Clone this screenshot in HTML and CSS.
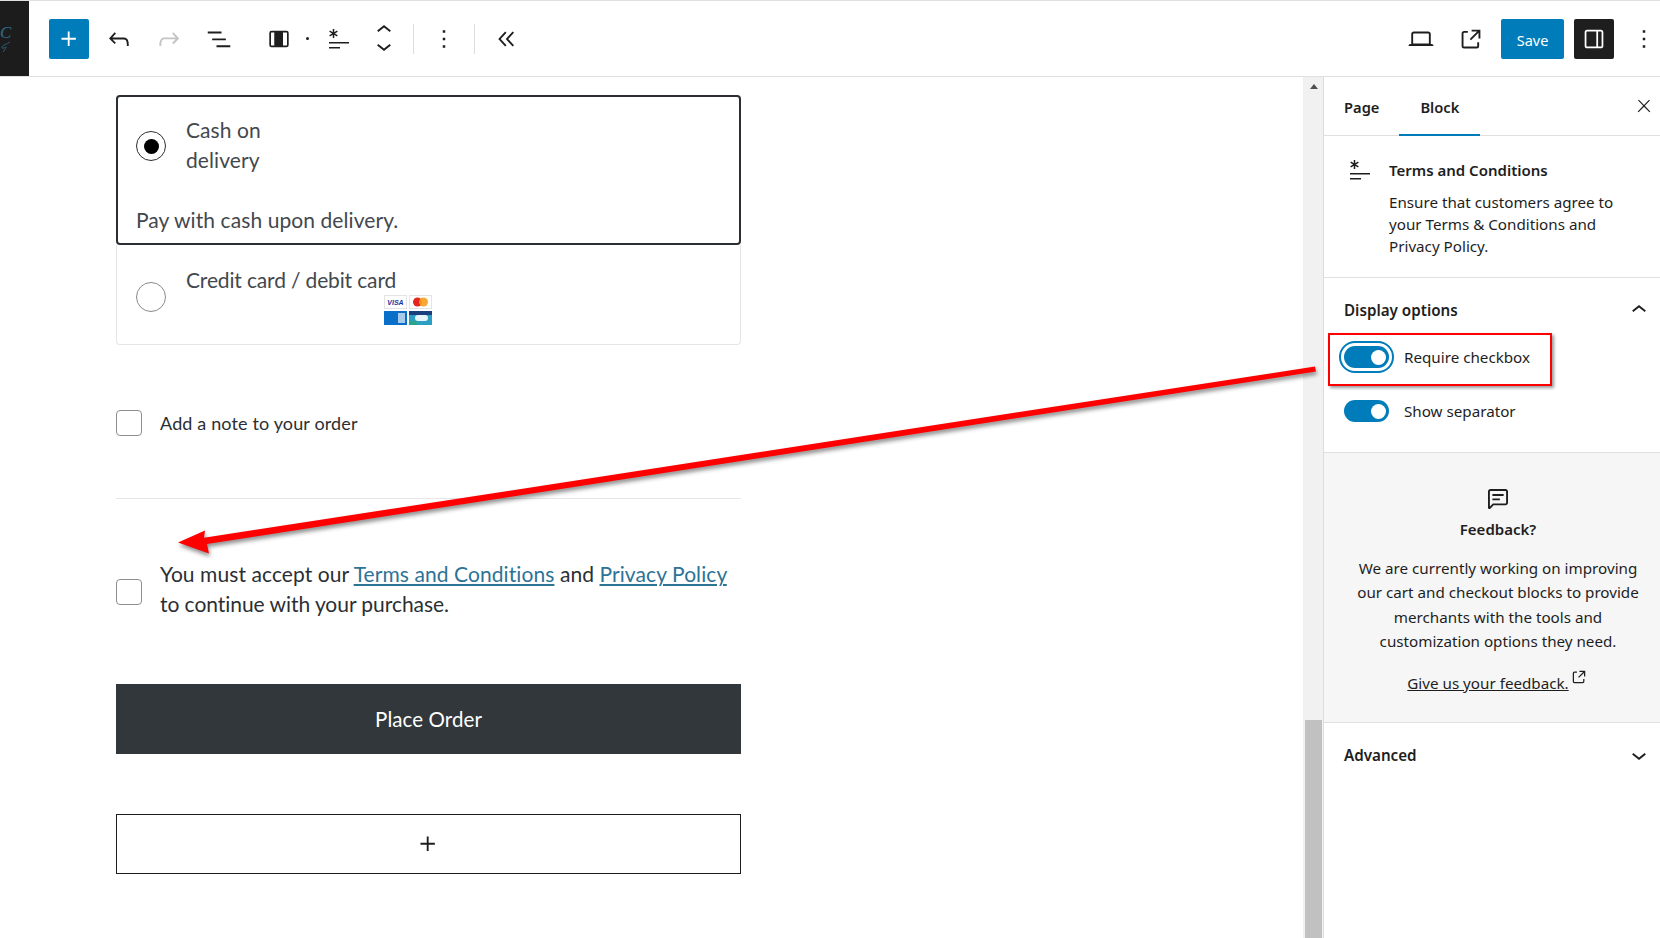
FILE: index.html
```html
<!DOCTYPE html>
<html lang="en">
<head>
<meta charset="utf-8">
<title>Checkout editor</title>
<link rel="stylesheet" href="styles.css">
</head>
<body>
<div class="app">
  <header class="topbar">
    <div class="logo"><span class="logo-c">C</span><svg class="logo-swirl" viewBox="0 0 12 12" width="12" height="12"><path d="M10 1C7 3 3 4 2 6s3 1 4 0-2 4-3 5"/></svg></div>
    <div class="tools">
      <button class="tool tool-primary"><svg viewBox="0 0 24 24" class="ic"><path d="M11 12.500V17.500H12.500V12.500H17.500V11H12.500V6H11V11H6V12.500H11Z"/></svg></button>
      <span class="tool"><svg viewBox="0 0 24 24" class="ic"><path d="M18.300 11.700c-.6-.6-1.400-.9-2.300-.9H6.700l2.900-3.300-1.100-1-4.500 5L8.500 16l1-1-2.700-2.700H16c.5 0 .9.2 1.300.5 1 1 1 3.400 1 4.500v.3h1.500v-.2c0-1.500 0-4.300-1.500-5.700z"/></svg></span>
      <span class="tool tool-off"><svg viewBox="0 0 24 24" class="ic"><path d="M15.600 6.500l-1.100 1 2.900 3.300H8c-.9 0-1.700.3-2.300.9-1.400 1.500-1.400 4.200-1.400 5.600v.2h1.500v-.3c0-1.100 0-3.500 1-4.500.3-.3.7-.5 1.300-.5h9.200L14.500 15l1.100 1.100 4.600-4.600-4.600-5z"/></svg></span>
      <span class="tool"><svg viewBox="0 0 24 24" class="ic"><path d="M3 6h11v1.500H3V6Zm3.500 5.500h11V13h-11v-1.500ZM21 17H10v1.500h11V17Z"/></svg></span>
      <span class="tool tool-columns"><svg viewBox="0 0 24 24" class="ic-columns"><path d="M4.500 3.800h15A2.200 2.200 0 0 1 21.700 6v12a2.200 2.200 0 0 1-2.200 2.200h-15A2.200 2.200 0 0 1 2.300 18V6a2.200 2.200 0 0 1 2.200-2.200Zm0 1.700a.5.500 0 0 0-.5.500v12a.5.500 0 0 0 .5.500H7.500v-13Zm11.500 0v13h3.500a.5.500 0 0 0 .5-.5V6a.5.500 0 0 0-.5-.5Z"/><path d="M7.500 5.500h8.500v13H7.500z"/></svg></span>
      <span class="tool-dot"></span>
      <span class="tool"><svg viewBox="0 0 24 24" class="ic-term"><use href="#terms"/></svg></span>
      <span class="tool-updown">
        <svg viewBox="0 0 24 24" class="ic-mini"><path d="M6.500 12.400L12 8l5.500 4.400-.9 1.200L12 10l-4.500 3.600-1-1.200z"/></svg>
        <svg viewBox="0 0 24 24" class="ic-mini"><path d="M17.500 11.600L12 16l-5.500-4.400.9-1.200L12 14l4.500-3.600 1 1.200z"/></svg>
      </span>
      <span class="tool-sep"></span>
      <span class="tool tool-more"><svg viewBox="0 0 24 24" class="ic"><path d="M13 19h-2v-2h2v2zm0-6h-2v-2h2v2zm0-6h-2V5h2v2z"/></svg></span>
      <span class="tool-sep tool-sep-end"></span>
      <span class="tool tool-collapse"><svg viewBox="0 0 24 24" class="ic"><path d="M11.600 7l-1.100-1L5 12l5.500 6 1.100-1L7 12l4.600-5zm6 0l-1.100-1-5.500 6 5.500 6 1.100-1-4.600-5 4.600-5z"/></svg></span>
    </div>
    <div class="actions">
      <span class="tool"><svg viewBox="0 0 24 24" class="ic"><path d="M20.500 16h-.7V8c0-1.100-.9-2-2-2H6.200c-1.100 0-2 .9-2 2v8h-.7c-.8 0-1.500.7-1.500 1.500h20c0-.8-.7-1.500-1.500-1.500zM5.700 8c0-.3.2-.5.5-.5h11.600c.3 0 .5.2.5.5v7.600H5.700V8z"/></svg></span>
      <span class="tool"><svg viewBox="0 0 24 24" class="ic"><path d="M19.500 4.500h-7V6h4.440l-5.970 5.970 1.060 1.060L18 7.060v4.440h1.500v-7Zm-13 1a2 2 0 0 0-2 2v10a2 2 0 0 0 2 2h10a2 2 0 0 0 2-2v-3H17v3a.5.5 0 0 1-.5.5h-10a.5.5 0 0 1-.5-.5v-10a.5.5 0 0 1 .5-.5h3V5.500h-3Z"/></svg></span>
      <button class="save">Save</button>
      <button class="tool tool-dark"><svg viewBox="0 0 24 24" class="ic-panel"><path d="M18 4H6c-1.100 0-2 .9-2 2v12c0 1.100.9 2 2 2h12c1.100 0 2-.9 2-2V6c0-1.100-.9-2-2-2zm-4 14.500H6c-.3 0-.5-.2-.5-.5V6c0-.3.2-.5.5-.5h8v13zm4.500-.5c0 .3-.2.5-.5.5h-2.500v-13H18c.3 0 .5.2.5.5v12z"/></svg></button>
      <span class="tool tool-opts"><svg viewBox="0 0 24 24" class="ic"><path d="M13 19h-2v-2h2v2zm0-6h-2v-2h2v2zm0-6h-2V5h2v2z"/></svg></span>
    </div>
  </header>

  <div class="workspace">
    <main class="canvas">
      <section class="pay pay-selected">
        <div class="pay-row">
          <span class="radio radio-on"></span>
          <span class="pay-label pay-label-narrow">Cash on delivery</span>
        </div>
        <p class="pay-desc">Pay with cash upon delivery.</p>
      </section>
      <section class="pay pay-other">
        <div class="pay-row">
          <span class="radio"></span>
          <div>
            <span class="pay-label pay-label-tight">Credit card / debit card</span>
            <svg class="cards" viewBox="0 0 48 30" width="48" height="30">
              <rect x=".5" y=".5" width="22" height="13" fill="#fff" stroke="#e4e4e4"/>
              <text x="11.500" y="10" class="visa">VISA</text>
              <rect x="25.500" y=".5" width="22" height="13" fill="#fff" stroke="#e4e4e4"/>
              <circle cx="33.500" cy="7" r="4.500" fill="#e5241d"/>
              <circle cx="39.500" cy="7" r="4.500" fill="#f79e1b" opacity=".9"/>
              <rect y="16" width="23" height="14" fill="#0a6fc9"/>
              <rect x="14" y="18" width="7" height="10" fill="#a9cbea"/>
              <rect x="25" y="16" width="23" height="14" fill="#2b9fc4"/>
              <rect x="25" y="16" width="23" height="4" fill="#1b3f7d"/>
              <rect x="25" y="26" width="8" height="4" fill="#2aa58c"/>
              <rect x="31" y="20" width="13" height="6" rx="3" fill="#e8f4f8"/>
            </svg>
          </div>
        </div>
      </section>

      <label class="check-row note-row">
        <span class="check"></span>
        <span>Add a note to your order</span>
      </label>

      <hr class="divider">

      <div class="check-row terms-row">
        <span class="check check-terms"></span>
        <p class="terms-text">You must accept our <a href="#">Terms and Conditions</a> and <a href="#">Privacy Policy</a> <span class="terms-tail">to continue with your purchase.</span></p>
      </div>

      <button class="place">Place Order</button>

      <div class="add-block"><svg viewBox="0 0 24 24" class="ic"><path d="M11 12.500V17.500H12.500V12.500H17.500V11H12.500V6H11V11H6V12.500H11Z"/></svg></div>
    </main>

    <div class="scrollbar">
      <span class="scroll-arrow"></span>
      <span class="scroll-thumb"></span>
    </div>

    <aside class="sidebar">
      <nav class="tabs">
        <span class="tab">Page</span>
        <span class="tab tab-active">Block</span>
        <svg viewBox="0 0 24 24" class="tab-close"><path d="M13 11.800l6.100-6.300-1-1-6.100 6.200-6.100-6.200-1 1 6.100 6.300-6.500 6.700 1 1 6.500-6.600 6.500 6.600 1-1z"/></svg>
      </nav>

      <section class="card">
        <svg viewBox="0 0 24 24" class="ic-term card-icon"><use href="#terms"/></svg>
        <div class="card-body">
          <h2 class="card-title">Terms and Conditions</h2>
          <p class="card-desc">Ensure that customers agree to your Terms &amp; Conditions and Privacy Policy.</p>
        </div>
      </section>

      <section class="panel">
        <div class="panel-head">
          <span>Display options</span>
          <svg viewBox="0 0 24 24" class="ic"><path d="M6.500 12.400L12 8l5.500 4.400-.9 1.200L12 10l-4.500 3.600-1-1.200z"/></svg>
        </div>
        <div class="toggle-row toggle-first"><span class="toggle toggle-focus"></span><span>Require checkbox</span></div>
        <div class="toggle-row"><span class="toggle"></span><span>Show separator</span></div>
      </section>

      <section class="feedback">
        <svg viewBox="0 0 24 24" class="ic feedback-icon"><path d="M18 4H6c-1.100 0-2 .9-2 2v12.900c0 .6.5 1.100 1.100 1.100.3 0 .5-.1.8-.3L8.500 17H18c1.100 0 2-.9 2-2V6c0-1.100-.9-2-2-2zm.5 11c0 .3-.2.5-.5.5H7.900l-2.400 2.400V6c0-.3.2-.5.5-.5h12c.3 0 .5.2.5.5v9z"/><path d="M7.500 8h9v1.500h-9zm0 3.500h6V13h-6z"/></svg>
        <h3 class="feedback-title">Feedback?</h3>
        <p class="feedback-text">We are currently working on improving our cart and checkout blocks to provide merchants with the tools and customization options they need.</p>
        <p class="feedback-link"><a href="#">Give us your feedback.</a><svg viewBox="0 0 24 24" class="ext"><path d="M19.500 4.500h-7V6h4.440l-5.970 5.970 1.060 1.060L18 7.060v4.440h1.500v-7Zm-13 1a2 2 0 0 0-2 2v10a2 2 0 0 0 2 2h10a2 2 0 0 0 2-2v-3H17v3a.5.5 0 0 1-.5.5h-10a.5.5 0 0 1-.5-.5v-10a.5.5 0 0 1 .5-.5h3V5.500h-3Z"/></svg></p>
      </section>

      <section class="panel-closed">
        <span>Advanced</span>
        <svg viewBox="0 0 24 24" class="ic"><path d="M17.500 11.600L12 16l-5.500-4.400.9-1.200L12 14l4.500-3.600 1 1.200z"/></svg>
      </section>
    </aside>
  </div>

  <div class="callout-box"></div>
  <svg class="callout-arrow" viewBox="0 0 1660 938" width="1660" height="938" aria-hidden="true">
    <path d="M1315 366.500 L204 537.800 L205 530.500 L178 542.500 L209 553.500 L207 544 L1316 371.500Z"/>
  </svg>
</div>

<svg class="defs" width="0" height="0" aria-hidden="true">
  <symbol id="terms" viewBox="0 0 24 24">
    <path d="M2 15h20v1.500H2zM2 20h11v1.500H2z"/>
    <path class="terms-star" d="M6.500 2v9M2.600 4.200l7.800 4.600M2.600 8.800l7.800-4.600"/>
  </symbol>
</svg>
</body>
</html>
```
FILE: styles.css
```css
* { box-sizing: border-box; }
html, body { margin: 0; height: 100%; overflow: hidden; background: #fff; }
body { font-family: "Noto Sans", "Open Sans", sans-serif; font-size: 15.2px; color: #1e1e1e; }
p, h2, h3 { margin: 0; }
button { border: 0; padding: 0; font: inherit; }
a { color: inherit; }

.app { position: relative; width: 1660px; height: 938px; overflow: hidden; display: flex; flex-direction: column; }

/* top bar */
.topbar { height: 77px; flex: none; display: flex; align-items: center; border-top: 1px solid #e0e0e0; border-bottom: 1px solid #e0e0e0; background: #fff; }
.logo { width: 29px; height: 75px; background: #1c1c1c; overflow: hidden; flex: none; display: flex; flex-direction: column; justify-content: center; }
.logo-c { font: italic 17px/16px "Liberation Serif", serif; color: #2f6f8e; }
.logo-swirl { fill: none; stroke: #2a5f7a; stroke-width: 1; }
.tools { display: flex; align-items: center; gap: 10px; margin-left: 20px; flex: 1; }
.actions { display: flex; align-items: center; gap: 10px; }
.tool { width: 40px; height: 40px; display: flex; align-items: center; justify-content: center; flex: none; color: #1e1e1e; background: none; border-radius: 2px; }
.ic { width: 30px; height: 30px; fill: currentColor; flex: none; }
.ic-columns { width: 24px; height: 24px; fill: currentColor; }
.ic-panel { width: 28px; height: 28px; fill: currentColor; }
.ic-term { width: 24px; height: 24px; fill: currentColor; flex: none; }
.terms-star { fill: none; stroke: currentColor; stroke-width: 1.5; }
.ic-mini { width: 30px; height: 30px; fill: currentColor; display: block; margin: -7px 0; flex: none; }
.tool-primary { background: #007cba; color: #fff; }
.tool-off { color: #c4c4c4; }
.tool-columns { margin-left: 10px; }
.tool-dot { width: 3px; height: 3px; background: #1e1e1e; border-radius: 50%; margin-left: -3px; flex: none; }
.tool-updown { width: 30px; display: flex; flex-direction: column; align-items: center; margin-top: -2px; flex: none; }
.tool-sep { width: 1px; height: 30px; background: #ddd; margin-left: 4px; flex: none; }
.tool-sep-end { margin-left: 0; }
.tool-collapse { margin-left: 2px; }
.save { width: 63px; height: 40px; background: #007cba; color: #fff; border-radius: 2px; font-size: 14.5px; padding-top: 2px; }
.tool-dark { background: #1e1e1e; color: #fff; }
.tool-opts { width: 32px; margin-left: 4px; }

/* workspace */
.workspace { flex: 1; min-height: 0; display: flex; }
.canvas { width: 1303px; flex: none; padding: 18px 0 0 116px; overflow: hidden; font-family: Lato, sans-serif; color: #43484d; font-size: 21px; letter-spacing: .08px; line-height: 30px; }
.canvas > * { width: 625px; }

.pay { display: block; }
.pay-selected { border: 2px solid #2b2f33; border-radius: 4px; padding: 18px 18px 0; height: 150px; }
.pay-other { border: 1px solid #e6e6e6; border-top: 0; border-radius: 0 0 4px 4px; padding: 20px 19px 0; height: 100px; }
.pay-row { display: flex; align-items: center; gap: 20px; }
.pay-label { display: block; }
.pay-label-narrow { width: 120px; }
.pay-label-tight { letter-spacing: -.15px; }
.pay-desc { margin-top: 30px; }
.radio { width: 30px; height: 30px; margin-top: 2px; border: 1px solid #8a8a8a; border-radius: 50%; flex: none; display: flex; align-items: center; justify-content: center; }
.pay-other .radio { margin-top: 4px; }
.radio-on { border-color: #2b2f33; }
.radio-on::before { content: ""; width: 15px; height: 15px; background: #000; border-radius: 50%; }
.cards { display: block; margin-left: 198px; }
.visa { font: italic 700 7px "Liberation Sans", sans-serif; fill: #1a2f9c; text-anchor: middle; letter-spacing: 0; }

.check-row { display: flex; gap: 18px; color: #2b2f33; }
.check { width: 26px; height: 26px; border: 1px solid #8f8f8f; border-radius: 4px; background: #fff; flex: none; }
.note-row { margin-top: 64px; height: 27px; align-items: center; font-size: 18px; letter-spacing: .14px; }
.divider { height: 1px; margin: 62px 0 0; border: 0; background: #e6e6e6; }
.terms-row { margin-top: 60px; align-items: flex-start; }
.check-terms { margin-top: 20px; }
.terms-text { flex: 1; }
.terms-text a { color: #2c7396; }
.terms-tail { letter-spacing: -.05px; }

.place { display: block; height: 70px; margin-top: 65px; padding-bottom: 1px; background: #32373c; color: #fff; font: inherit; font-size: 20.5px; letter-spacing: .08px; }
.add-block { height: 60px; margin-top: 60px; padding-right: 2px; border: 1px solid #1e1e1e; display: flex; align-items: center; justify-content: center; color: #1e1e1e; }

/* scrollbar */
.scrollbar { width: 21px; flex: none; background: #f1f1f1; border-right: 1px solid #ddd; display: flex; flex-direction: column; justify-content: space-between; align-items: center; padding-top: 7px; }
.scroll-arrow { width: 0; height: 0; margin-left: 1px; border: 4.5px solid transparent; border-top: 0; border-bottom: 5px solid #505050; }
.scroll-thumb { width: 17px; height: 218px; background: #c1c1c1; }

/* sidebar */
.sidebar { flex: 1; min-width: 0; display: flex; flex-direction: column; line-height: 22px; }
.tabs { height: 59px; flex: none; display: flex; align-items: stretch; border-bottom: 1px solid #e0e0e0; padding: 1px 0 0 20px; position: relative; font-weight: 600; }
.tab { display: flex; align-items: center; font-size: 14.7px; }
.tab-active { margin-left: 20px; margin-bottom: -1px; padding: 0 21px; box-shadow: inset 0 -2px 0 #007cba; }
.tab-close { position: absolute; right: 6px; top: 19px; width: 20px; height: 20px; fill: #1e1e1e; }
.card { display: flex; height: 142px; flex: none; border-bottom: 1px solid #e0e0e0; padding: 22px 30px 0 24px; gap: 17px; }
.card-title { font-size: 15px; font-weight: 600; line-height: 24px; margin-bottom: 9px; }
.panel { height: 175px; flex: none; border-bottom: 1px solid #e0e0e0; padding: 0 20px; }
.panel-head { height: 64px; display: flex; align-items: center; justify-content: space-between; font-weight: 600; }
.panel-head .ic { margin-right: -14px; }
.toggle-row { display: flex; align-items: center; gap: 15px; height: 22px; margin-bottom: 32px; }
.toggle-first { margin-top: 4px; }
.toggle { width: 45px; height: 22px; border-radius: 11px; background: #007cba; position: relative; flex: none; }
.toggle::after { content: ""; position: absolute; width: 15px; height: 15px; border-radius: 50%; background: #fff; right: 3px; top: 3.5px; }
.toggle-focus { outline: 2px solid #007cba; outline-offset: 3px; }
.feedback { height: 270px; flex: none; background: #f6f6f6; border-bottom: 1px solid #e0e0e0; text-align: center; padding: 31px 16px 0 28px; display: flex; flex-direction: column; align-items: center; }
.feedback-title { font-size: 15px; font-weight: 600; line-height: 24px; margin-top: 3px; }
.feedback-text { margin-top: 14.5px; line-height: 24.5px; }
.feedback-link { margin-top: 17.5px; line-height: 24px; display: flex; }
.ext { width: 20px; height: 20px; fill: #1e1e1e; margin-top: -4px; }
.panel-closed { height: 64px; flex: none; display: flex; align-items: center; justify-content: space-between; padding: 0 20px; font-weight: 600; }
.panel-closed .ic { margin-right: -14px; }

/* screenshot annotations */
.callout-box { position: absolute; left: 1328px; top: 333px; width: 224px; height: 53px; border: 2px solid #f00; box-shadow: 2px 2px 3px rgba(0,0,0,.4); }
.callout-arrow { position: absolute; left: 0; top: 0; pointer-events: none; }
.callout-arrow path { fill: #f00; filter: drop-shadow(1px 3px 2px rgba(0,0,0,.45)); }
.defs { position: absolute; }
```
